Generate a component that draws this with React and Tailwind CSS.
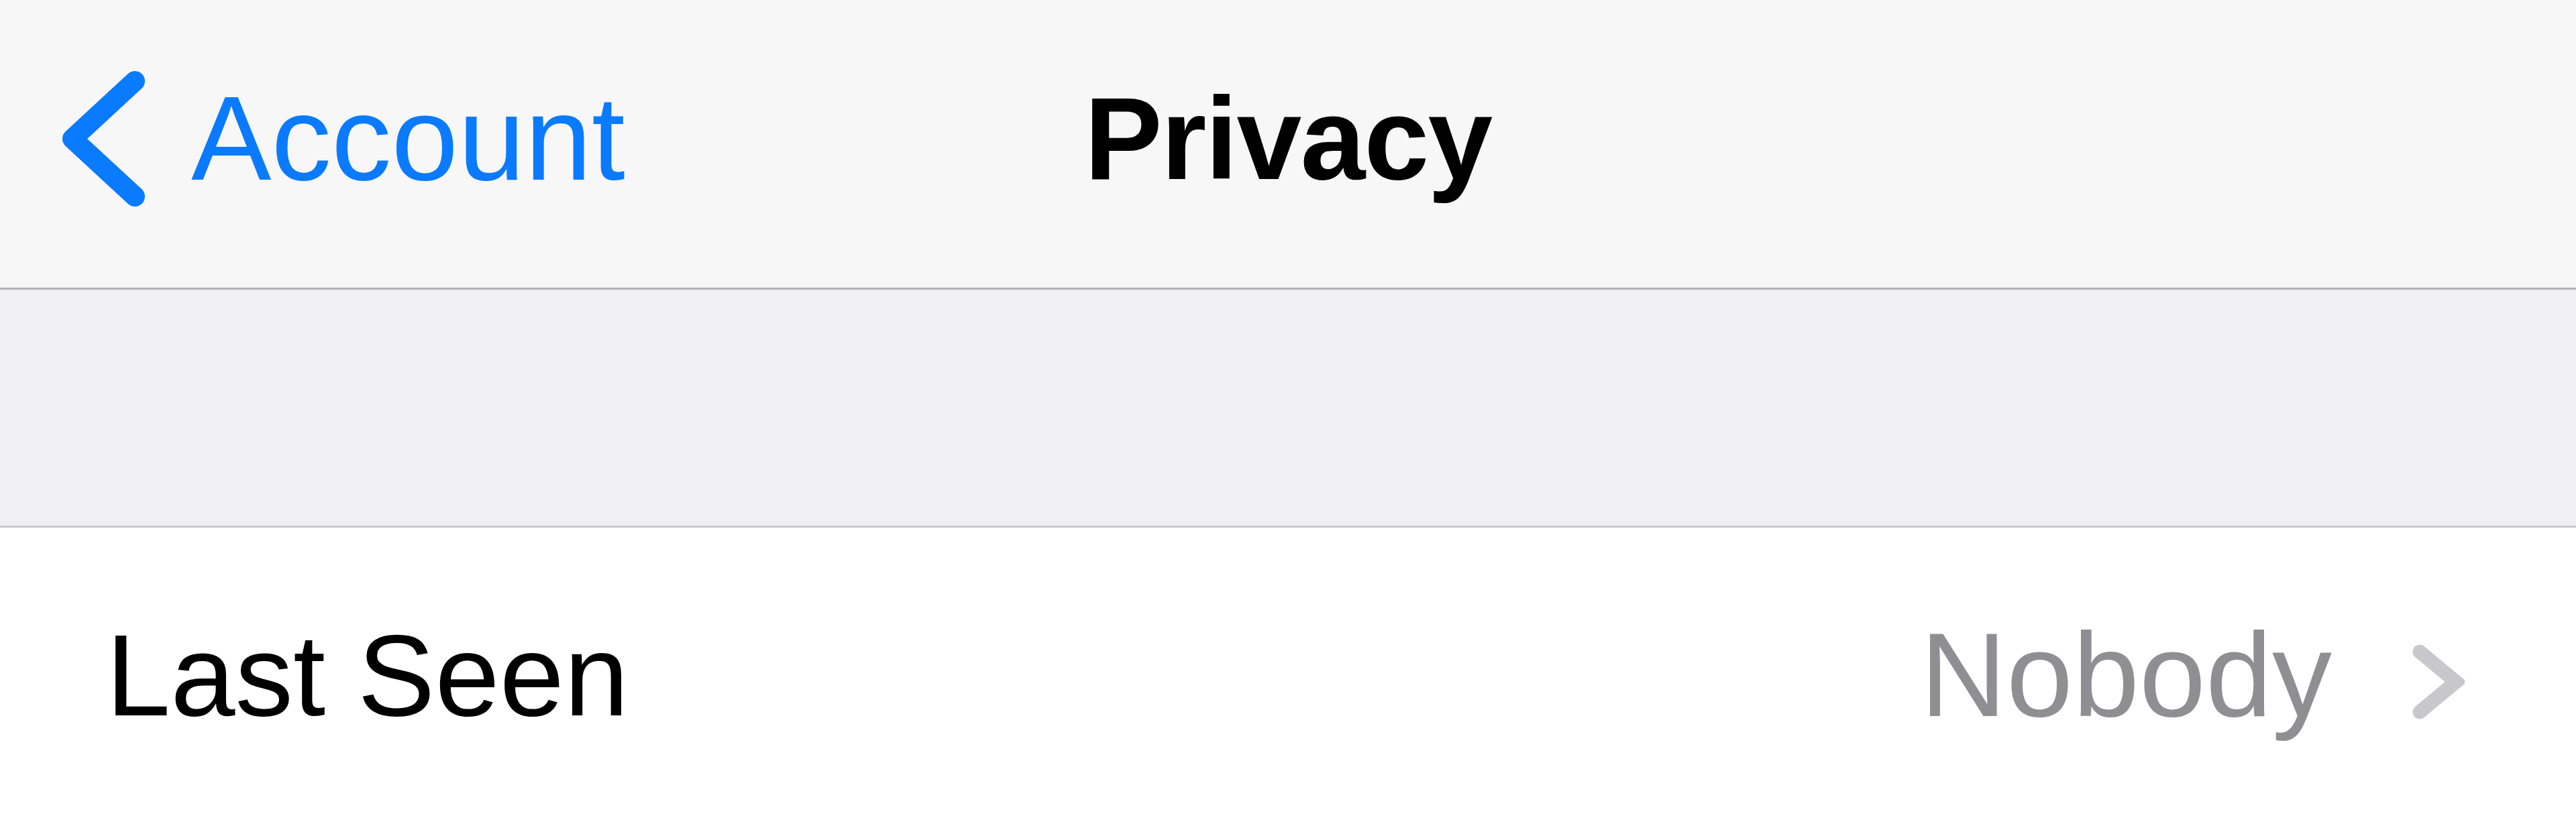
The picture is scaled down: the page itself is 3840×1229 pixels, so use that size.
const font = { fontFamily: '"Liberation Sans", Arial, sans-serif' };

// Back chevron in the navigation bar
const BackChevron = () => (
    <svg width="125" height="206" viewBox="0 0 125 206" fill="none">
        <path
            d="M110 17 L17 103 L110 189"
            stroke="#0a7aff"
            strokeWidth="30"
            strokeLinecap="round"
            strokeLinejoin="round"
        />
    </svg>
);

// Disclosure chevron at the end of a table row
const Disclosure = () => (
    <svg width="80" height="112" viewBox="0 0 80 112" fill="none" className="mt-[20px]">
        <path
            d="M13 11 L67 56 L13 101"
            stroke="#c7c7cc"
            strokeWidth="21"
            strokeLinecap="round"
            strokeLinejoin="miter"
        />
    </svg>
);

const App = () => {
    return (
        <div className="h-screen w-full overflow-hidden bg-white" style={font}>
            {/* Navigation bar */}
            <div className="grid h-[432px] grid-cols-[1fr_auto_1fr] items-center border-b-[3px] border-[#b2b2b4] bg-[#f7f7f7] pb-[16px]">
                <div className="flex items-center gap-[69px] pl-[91px]">
                    <BackChevron />
                    <span className="text-[179px] leading-none text-[#0a7aff]">Account</span>
                </div>
                <span className="text-[174px] font-bold leading-none tracking-[-0.01em] text-black">Privacy</span>
                <div />
            </div>

            {/* Section header spacing */}
            <div className="h-[355px] border-b-[3px] border-[#c8c7cc] bg-[#efeff4]" />

            {/* Row */}
            <div className="flex h-[450px] items-center justify-between pb-[10px] pl-[158px] pr-[166px]">
                <span className="text-[173px] leading-none text-black">Last Seen</span>
                <div className="flex items-center gap-[118px]">
                    <span className="text-[178px] leading-none text-[#8e8e93]">Nobody</span>
                    <Disclosure />
                </div>
            </div>
        </div>
    );
};

export default App;
